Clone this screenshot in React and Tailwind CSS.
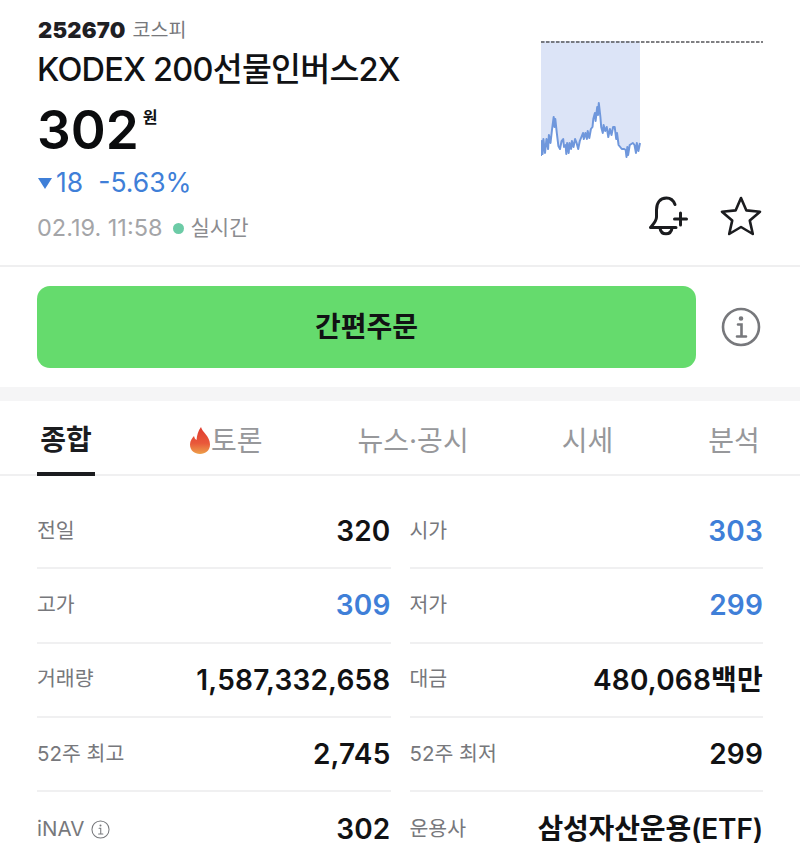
import React from "react";

const FONT = "font-['Inter','Noto_Sans_CJK_KR',sans-serif]";

// 차트 좌표 (시세 라인)
const chartPoints = [
  [0, 115], [1, 100], [2, 113], [3, 98], [5, 112], [7, 98], [9, 108], [10, 94], [12, 102], [14, 88],
  [16, 76], [17, 86], [18, 78], [20, 92], [22, 105], [24, 108], [26, 100], [28, 98], [29, 106],
  [31, 104], [32, 113], [33, 102], [35, 112], [36, 102], [38, 108], [39, 100], [41, 106], [43, 98],
  [45, 102], [47, 108], [49, 100], [51, 96], [53, 92], [54, 98], [56, 92], [58, 98], [59, 90], [61, 97],
  [63, 88], [65, 86], [66, 78], [68, 72], [69, 80], [71, 66], [72, 74], [73, 62], [75, 76], [76, 86],
  [78, 92], [79, 84], [81, 90], [83, 86], [85, 96], [87, 88], [89, 94], [91, 86], [93, 86],
  [95, 98], [96, 92], [98, 104], [100, 106], [102, 108], [105, 108], [107, 109], [108, 116], [109, 106],
  [110, 114], [112, 104], [116, 102], [118, 104], [120, 112], [121, 102], [123, 110], [125, 102],
];

const scaleX = 99 / 125;
const line = chartPoints.map(([x, y]) => `${(x * scaleX).toFixed(1)},${y}`).join(" ");

const rows = [
  [{ label: "전일", value: "320" }, { label: "시가", value: "303", blue: true }],
  [{ label: "고가", value: "309", blue: true }, { label: "저가", value: "299", blue: true }],
  [{ label: "거래량", value: "1,587,332,658" }, { label: "대금", value: "480,068백만" }],
  [{ label: "52주 최고", value: "2,745" }, { label: "52주 최저", value: "299" }],
  [{ label: "iNAV", value: "302", info: true }, { label: "운용사", value: "삼성자산운용(ETF)", tight: true }],
];

function InfoIcon({ size, stroke, color }) {
  return (
    <svg width={size} height={size} viewBox="0 0 40 40" fill="none" stroke={color} strokeWidth={stroke} strokeLinecap="round">
      <circle cx="20" cy="20" r="18" />
      <circle cx="20" cy="11.5" r="1" fill={color} />
      <path d="M17 17.5H20.5V29M16 29.5H25" />
    </svg>
  );
}

function Cell({ label, value, blue, info, tight, divider }) {
  return (
    <div className={`flex items-center justify-between h-[74.25px] ${divider ? "border-b-2 border-[#f0f0f1]" : ""}`}>
      <div className="flex items-center gap-[7px] text-[20.5px] text-[#77787c]">
        {label}
        {info && <InfoIcon size={19} stroke={2.2} color="#77787c" />}
      </div>
      <div className={`text-[28px] font-semibold ${tight ? "tracking-[-0.16px]" : "tracking-[0.2px]"} ${blue ? "text-[#3f7fd8]" : "text-[#111214]"}`}>{value}</div>
    </div>
  );
}

export default function App() {
  return (
    <div className={`w-[800px] h-[856px] overflow-hidden bg-white ${FONT}`}>
      {/* 상단 종목 정보 */}
      <div className="flex justify-between h-[267px] pl-[38px] pr-[37px] pt-[17px] border-b-2 border-[#efeff0]">
        <div className="flex flex-col">
          <div className="flex items-center gap-[7px] h-[27px]">
            <span className="text-[22px] font-black tracking-[0.2px] text-[#1f2024]">252670</span>
            <span className="text-[19.5px] text-[#77787c]">코스피</span>
          </div>
          <div className="mt-[5px] -ml-[1px] text-[32.5px] leading-[42px] font-medium tracking-[-0.75px] text-[#111214]">KODEX 200선물인버스2X</div>
          <div className="flex items-start mt-[8px] -ml-[1px] h-[62px]">
            <span className="text-[53px] leading-[62px] font-semibold text-[#0b0c0e]">302</span>
            <span className="ml-[4px] mt-[6px] text-[16px] font-semibold text-[#111214]">원</span>
          </div>
          <div className="flex items-center mt-[5px] h-[34px] text-[26.5px] text-[#3f7fd8]">
            <svg width="14" height="11" viewBox="0 0 14 11" className="mr-[4px]">
              <path d="M0 0H14L7 11Z" fill="#3f7fd8" />
            </svg>
            <span>18</span>
            <span className="ml-[15px]">-5.63%</span>
          </div>
          <div className="flex items-center mt-[12px] -ml-[1px] h-[32px] text-[23.5px] text-[#a4a5a8]">
            <span>02.19. 11:58</span>
            <span className="ml-[10px] w-[11px] h-[11px] rounded-full bg-[#6ccba6]" />
            <span className="ml-[7px] text-[21px] text-[#8b8c90]">실시간</span>
          </div>
        </div>

        <div className="flex flex-col items-end pt-[24px]">
          <svg width="222" height="118" viewBox="0 0 222 118" fill="none">
            <polygon points={`0,0 ${line} 99,0`} fill="#dce4f7" />
            <polyline points={line} stroke="#6f97dc" strokeWidth="2" strokeLinejoin="round" />
            <line x1="0" y1="1" x2="222" y2="1" stroke="#55565a" strokeWidth="1.6" strokeDasharray="3.5 1.5" />
          </svg>
          <div className="flex items-center gap-[30px] mt-[36px] mr-[1px]">
            <svg width="42" height="42" viewBox="0 0 42 42" fill="none" stroke="#1b1c1f" strokeWidth="3" strokeLinecap="round" strokeLinejoin="round">
              <path d="M27 9.5C25.5 5.5 22.5 3 18.5 3C11.5 3 8.5 8.5 8.5 15V22C8.5 26 5.5 29 2.5 32.5H28" />
              <path d="M12 33C12.5 37 15 38.8 18 38.8C21 38.8 23.5 37 24 33" />
              <path d="M32.5 18V30M26.5 24H38.5" />
            </svg>
            <svg width="42" height="42" viewBox="0 0 42 42" fill="none" stroke="#1b1c1f" strokeWidth="2.6" strokeLinejoin="round">
              <path d="M21 3L26.4 15.4L40 16.7L29.8 25.6L32.8 39L21 32L9.2 39L12.2 25.6L2 16.7L15.6 15.4Z" />
            </svg>
          </div>
        </div>
      </div>

      {/* 간편주문 */}
      <div className="flex items-center h-[120px] pl-[37px] pr-[38px] pb-[1px]">
        <button className="flex-1 h-[82px] rounded-[13px] bg-[#65db6d] text-[28px] font-semibold text-[#111214]">간편주문</button>
        <div className="ml-[24px] w-[42px] flex justify-center">
          <InfoIcon size={40} stroke={2.6} color="#77787c" />
        </div>
      </div>
      <div className="h-[14px] bg-[#f5f5f6]" />

      {/* 탭 */}
      <div className="flex h-[75px] pl-[37px] border-b-2 border-[#f0f0f1] text-[28px] text-[#97989b]">
        <div className="w-[58px] h-[75px] pt-[6px] border-b-[4px] border-[#1b1c1f] flex items-center justify-center font-semibold text-[#1b1c1f]">종합</div>
        <div className="flex items-center pt-[6px] ml-[94px]">
          <svg width="22" height="28" viewBox="0 0 22 28">
            <defs>
              <linearGradient id="flame" x1="0" y1="0" x2="0" y2="1">
                <stop offset="0" stopColor="#df3b2f" />
                <stop offset="0.6" stopColor="#e9583a" />
                <stop offset="1" stopColor="#eda04a" />
              </linearGradient>
            </defs>
            <path d="M12 0C13 5 21 9 21 17.5C21 23.5 16.5 27 11 27C5.5 27 1 23.5 1 17.5C1 13.5 3.5 11 5 9C5.5 11 6 12 7.5 13C8 8 9 4 12 0Z" fill="url(#flame)" />
          </svg>
          <span>토론</span>
        </div>
        <div className="flex items-center pt-[6px] ml-[95px]">뉴스·공시</div>
        <div className="flex items-center pt-[6px] ml-[93px]">시세</div>
        <div className="flex items-center pt-[6px] ml-[95px]">분석</div>
      </div>

      {/* 시세 표 */}
      <div className="pl-[37px] pr-[37px] pt-[19px]">
        {rows.map((row, i) => (
          <div key={i} className="grid grid-cols-2 gap-x-[19px]">
            {row.map((cell) => (
              <Cell key={cell.label} {...cell} divider={i < rows.length - 1} />
            ))}
          </div>
        ))}
      </div>
    </div>
  );
}
